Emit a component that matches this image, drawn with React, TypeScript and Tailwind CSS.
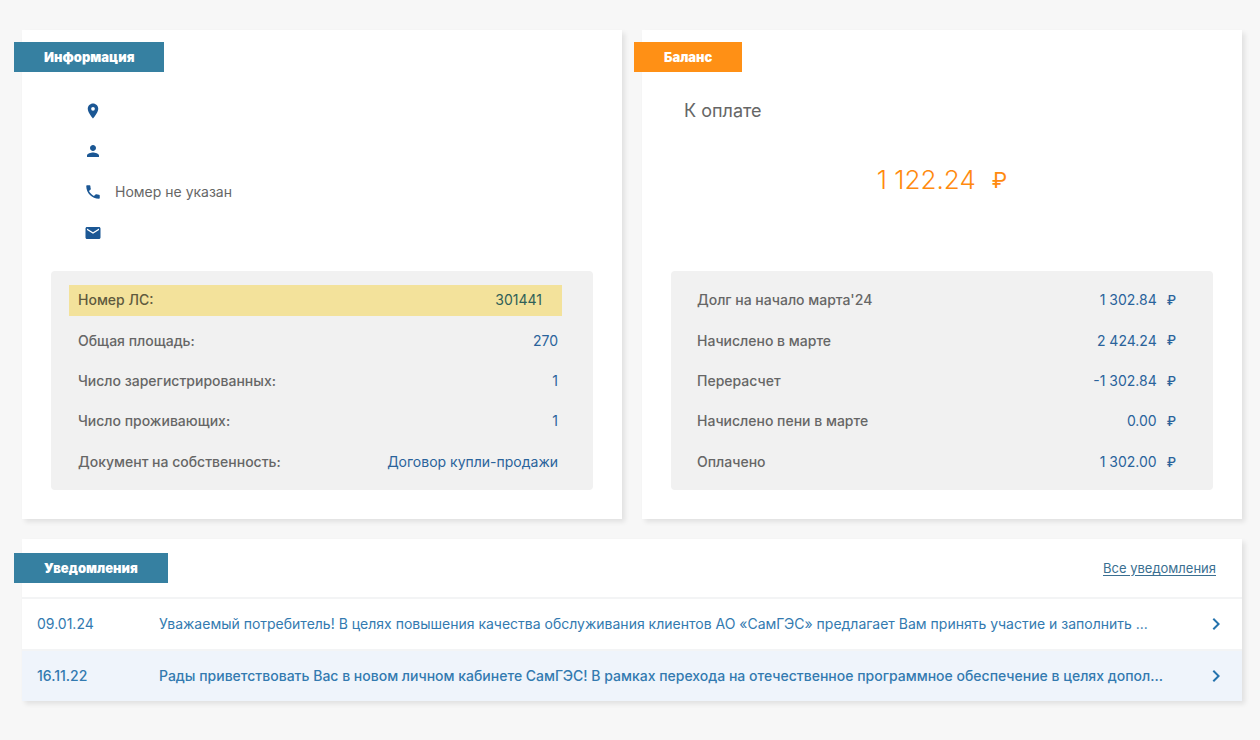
import type { ReactNode } from "react";
import clsx from "clsx";
import { MdChevronRight, MdEmail, MdPerson, MdPhone, MdPlace } from "react-icons/md";

const contacts = [
  { icon: MdPlace, label: "Адрес", value: "" },
  { icon: MdPerson, label: "Владелец", value: "" },
  { icon: MdPhone, label: "Телефон", value: "Номер не указан" },
  { icon: MdEmail, label: "Почта", value: "" },
];

const details = [
  { label: "Номер ЛС:", value: "301441", highlight: true },
  { label: "Общая площадь:", value: "270" },
  { label: "Число зарегистрированных:", value: "1" },
  { label: "Число проживающих:", value: "1" },
  { label: "Документ на собственность:", value: "Договор купли-продажи" },
];

const charges = [
  { label: "Долг на начало марта'24", value: "1 302.84" },
  { label: "Начислено в марте", value: "2 424.24" },
  { label: "Перерасчет", value: "-1 302.84" },
  { label: "Начислено пени в марте", value: "0.00" },
  { label: "Оплачено", value: "1 302.00" },
];

const notices = [
  {
    date: "09.01.24",
    text: "Уважаемый потребитель! В целях повышения качества обслуживания клиентов АО «СамГЭС» предлагает Вам принять участие и заполнить ...",
    unread: false,
  },
  {
    date: "16.11.22",
    text: "Рады приветствовать Вас в новом личном кабинете СамГЭС! В рамках перехода на отечественное программное обеспечение в целях допол...",
    unread: true,
  },
];

function Tag({ children, accent = false }: { children: ReactNode; accent?: boolean }) {
  return (
    <h2
      className={clsx(
        "-ml-2 h-[30px] w-fit px-[30px] text-[13px] leading-[30px] font-black text-white",
        accent ? "bg-[#ff9015]" : "bg-[#3680a1]"
      )}
    >
      {children}
    </h2>
  );
}

function Card({ children, className }: { children: ReactNode; className?: string }) {
  return (
    <section className={clsx("bg-white shadow-[3px_3px_5px_rgba(0,0,0,0.09)]", className)}>
      {children}
    </section>
  );
}

export default function App() {
  return (
    <main className="min-h-screen bg-[#f7f7f7] pt-[30px] pr-[18px] pb-10 pl-[22px] font-['Inter',sans-serif] text-sm text-[#666]">
      <div className="grid grid-cols-2 gap-5">
        <Card className="flex flex-col pt-3 pb-[29px]">
          <Tag>Информация</Tag>
          <ul className="mt-[19px] grid min-h-[162px] pl-[62px]">
            {contacts.map(({ icon: Icon, label, value }) => (
              <li key={label} className="flex items-center gap-[13px]">
                <Icon className="size-[18px] text-[#1b5794]" aria-label={label} />
                <span>{value}</span>
              </li>
            ))}
          </ul>
          <dl className="mx-[29px] mt-[18px] grid min-h-[219px] rounded bg-[#f1f1f1] pt-[9px] pb-2">
            {details.map((row) => (
              <div key={row.label} className="flex items-center pr-[31px] pl-[18px]">
                <div
                  className={clsx(
                    "flex h-[31px] flex-1 items-center justify-between pl-[9px]",
                    row.highlight ? "bg-[#f3e29b] pr-5" : "pr-1"
                  )}
                >
                  <dt className={clsx("font-[550]", row.highlight && "text-[#5f5a3e]")}>{row.label}</dt>
                  <dd className={row.highlight ? "text-[#2f6058]" : "text-[#2a639b]"}>{row.value}</dd>
                </div>
              </div>
            ))}
          </dl>
        </Card>

        <Card className="flex flex-col pt-3 pb-[29px]">
          <Tag accent>Баланс</Tag>
          <p className="mt-[25px] pl-[42px] text-lg leading-7">К оплате</p>
          <p className="mt-[35px] flex items-center justify-center gap-4 text-[26px] leading-10 text-[#ff8a0f]">
            <span className="font-light">1 122.24</span>
            <span className="text-[22px]">₽</span>
          </p>
          <dl className="mx-[29px] mt-auto grid min-h-[219px] rounded bg-[#f1f1f1] pt-[9px] pb-2">
            {charges.map((row) => (
              <div key={row.label} className="flex items-center justify-between pr-[37px] pl-[26px]">
                <dt className="font-[550]">{row.label}</dt>
                <dd className="flex items-center gap-[10px] text-[#2a639b]">
                  {row.value}
                  <span className="text-[13px] font-medium">₽</span>
                </dd>
              </div>
            ))}
          </dl>
        </Card>
      </div>

      <Card className="mt-5">
        <header className="flex h-[58px] items-center justify-between pr-[26px]">
          <Tag>Уведомления</Tag>
          <a href="#notices" className="text-[13px] text-[#3a6f91] underline underline-offset-2">
            Все уведомления
          </a>
        </header>
        <ul>
          {notices.map((notice) => (
            <li key={notice.date} className="border-t-2 border-[#f3f4f5]">
              <a
                href="#notice"
                className={clsx(
                  "flex h-[50px] items-center pr-[14px] pl-[15px] text-[#337ab0]",
                  notice.unread && "bg-[#eff4fb] font-[550]"
                )}
              >
                <span className="w-[122px] shrink-0">{notice.date}</span>
                <span className="min-w-0 flex-1 whitespace-nowrap">{notice.text}</span>
                <MdChevronRight className="size-6 shrink-0 text-[#2573ad]" />
              </a>
            </li>
          ))}
        </ul>
      </Card>
    </main>
  );
}
